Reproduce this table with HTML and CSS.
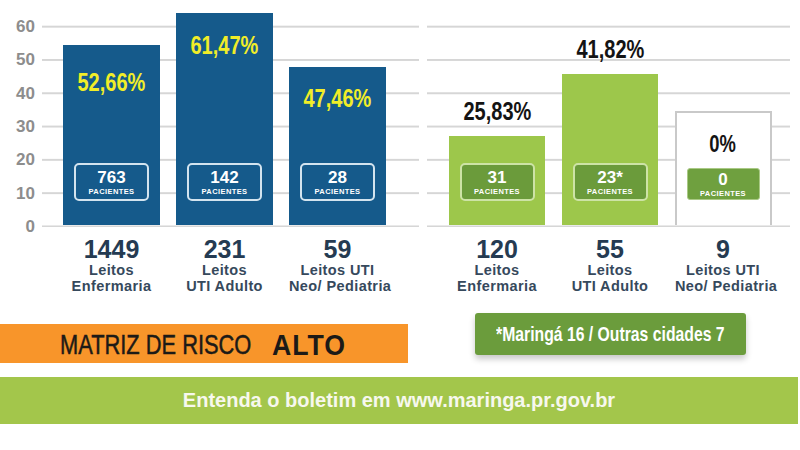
FILE: index.html
```html
<!DOCTYPE html>
<html lang="pt-BR">
<head>
<meta charset="utf-8">
<title>Boletim leitos</title>
<link rel="stylesheet" href="styles.css">
</head>
<body>
<div class="page">
  <div class="top">
    <div class="axis">
      <span>70</span><span>60</span><span>50</span><span>40</span><span>30</span><span>20</span><span>10</span><span>0</span>
    </div>
    <div class="group group-blue">
      <div class="bars">
        <div class="bar blue pad-a" style="height:180px">
          <span class="pct">52,66%</span>
          <div class="pat"><b>763</b><small>PACIENTES</small></div>
        </div>
        <div class="bar blue pad-b" style="height:212px">
          <span class="pct">61,47%</span>
          <div class="pat"><b>142</b><small>PACIENTES</small></div>
        </div>
        <div class="bar blue pad-c" style="height:158px">
          <span class="pct">47,46%</span>
          <div class="pat"><b>28</b><small>PACIENTES</small></div>
        </div>
      </div>
      <div class="labels">
        <div class="lab"><strong>1449</strong><span>Leitos<br>Enfermaria</span></div>
        <div class="lab"><strong>231</strong><span>Leitos<br>UTI Adulto</span></div>
        <div class="lab"><strong>59</strong><span>Leitos UTI<br>Neo/ Pediatria</span></div>
      </div>
    </div>
    <div class="group group-green">
      <div class="bars">
        <div class="col">
          <span class="pct">25,83%</span>
          <div class="bar green" style="height:89px">
            <div class="pat"><b>31</b><small>PACIENTES</small></div>
          </div>
        </div>
        <div class="col">
          <span class="pct">41,82%</span>
          <div class="bar green" style="height:151px">
            <div class="pat"><b>23*</b><small>PACIENTES</small></div>
          </div>
        </div>
        <div class="col">
          <div class="bar empty" style="height:114px">
            <span class="pct">0%</span>
            <div class="pat"><b>0</b><small>PACIENTES</small></div>
          </div>
        </div>
      </div>
      <div class="labels">
        <div class="lab"><strong>120</strong><span>Leitos<br>Enfermaria</span></div>
        <div class="lab"><strong>55</strong><span>Leitos<br>UTI Adulto</span></div>
        <div class="lab"><strong>9</strong><span>Leitos UTI<br>Neo/ Pediatria</span></div>
      </div>
    </div>
  </div>
  <div class="mid">
    <div class="risk"><span class="risk-a">MATRIZ DE RISCO</span><span class="risk-b">ALTO</span></div>
    <div class="note"><span>*Maringá 16 / Outras cidades 7</span></div>
  </div>
  <div class="footer">Entenda o boletim em www.maringa.pr.gov.br</div>
</div>
</body>
</html>
```
FILE: styles.css
```css
body {
  margin: 0;
  background: #fff;
  font-family: "Liberation Sans", Arial, sans-serif;
}
.page {
  width: 800px;
  height: 450px;
  overflow: hidden;
}
.top {
  display: flex;
  height: 313px;
}
.axis {
  width: 42px;
  box-sizing: border-box;
  padding-right: 7px;
  display: flex;
  flex-direction: column;
  align-items: flex-end;
  margin-top: -23.25px;
}
.axis span {
  flex: none;
  height: 33.3px;
  line-height: 33.3px;
  font-size: 17px;
  font-weight: bold;
  color: #8d8d8d;
}
.group-blue { width: 377px; }
.group-green { width: 363px; margin-left: 8px; }
.bars {
  height: 227px;
  box-sizing: border-box;
  padding-bottom: 2px;
  display: flex;
  align-items: flex-end;
  background-image: linear-gradient(to bottom, #d6d6d6 0, #d6d6d6 2px, transparent 2px);
  background-size: 100% 33.3px;
  background-position: 0 25.7px;
}
.group-blue .bars { padding-left: 21px; gap: 16px; }
.group-green .bars { padding-left: 22px; gap: 17px; }
.bar {
  flex: none;
  width: 97px;
  box-sizing: border-box;
  display: flex;
  flex-direction: column;
  align-items: center;
}
.bar.blue { background: #155a8b; }
.pct {
  display: inline-block;
  font-size: 25px;
  line-height: 25px;
  font-weight: bold;
  transform: scaleX(.8);
  white-space: nowrap;
}
.blue .pct { color: #f1ed28; }
.pad-a { padding-top: 25px; }
.pad-b { padding-top: 20px; }
.pad-c { padding-top: 19px; }
.pat {
  margin-top: auto;
  margin-bottom: 24px;
  width: 75px;
  height: 38px;
  box-sizing: border-box;
  border: 2px solid #d3e4ef;
  border-radius: 5px;
  display: flex;
  flex-direction: column;
  align-items: center;
  justify-content: center;
  color: #fff;
}
.pat b {
  font-size: 17px;
  line-height: 19px;
}
.pat small {
  font-size: 7.5px;
  line-height: 9px;
  font-weight: bold;
  letter-spacing: .4px;
}
.col {
  flex: none;
  width: 96px;
  display: flex;
  flex-direction: column;
  align-items: center;
}
.col .pct {
  color: #141414;
  margin-bottom: 12px;
}
.bar.green {
  width: 96px;
  background: #9dc74b;
}
.green .pat {
  background: #6b9b3b;
  border-color: #cde3a6;
}
.bar.empty {
  width: 97px;
  background: #fff;
  border: 2px solid #c9c9c9;
  border-bottom: 0;
  padding-top: 20px;
}
.empty .pct {
  font-size: 23px;
  line-height: 23px;
  color: #141414;
}
.empty .pat {
  width: 73px;
  height: 35px;
  border: 1px solid #a9c985;
  border-radius: 3px;
  background: #6fa03f;
  margin-bottom: 25px;
}
.labels {
  display: flex;
  margin-top: 9px;
}
.group-blue .labels { padding-left: 21px; gap: 16px; }
.group-green .labels { padding-left: 22px; gap: 17px; }
.lab {
  flex: none;
  width: 97px;
  text-align: center;
  white-space: nowrap;
}
.group-green .lab { width: 96px; }
.lab strong {
  display: block;
  font-size: 25px;
  line-height: 26px;
  color: #253b52;
}
.lab span {
  display: block;
  font-size: 14.5px;
  line-height: 16.2px;
  letter-spacing: .4px;
  font-weight: bold;
  color: #36495c;
}
.mid {
  display: flex;
  align-items: flex-start;
  height: 50px;
}
.risk {
  margin-top: 11px;
  width: 408px;
  height: 39px;
  box-sizing: border-box;
  padding-left: 60px;
  padding-top: 3px;
  background: #f8952a;
  display: flex;
  align-items: center;
  color: #1c1a17;
}
.risk-a {
  display: inline-block;
  width: 192px;
  white-space: nowrap;
  font-size: 28px;
  -webkit-text-stroke: 0.5px #1c1a17;
  transform: scaleX(.78);
  transform-origin: left center;
}
.risk-b {
  display: inline-block;
  margin-left: 20px;
  font-size: 29px;
  font-weight: bold;
  letter-spacing: 1px;
  transform: scaleX(.92);
  transform-origin: left center;
}
.note {
  margin-left: 67px;
  width: 271px;
  height: 42px;
  background: #6b9c3c;
  border-radius: 3px;
  box-shadow: 0 4px 6px rgba(0, 0, 0, .22);
  display: flex;
  align-items: center;
  justify-content: center;
  color: #fff;
}
.note span {
  display: inline-block;
  font-size: 21px;
  font-weight: bold;
  white-space: nowrap;
  transform: scaleX(.75);
}
.footer {
  margin-top: 14px;
  width: 798px;
  height: 47px;
  background: #a3c64b;
  color: #f7f8ee;
  font-size: 20px;
  font-weight: bold;
  text-align: center;
  line-height: 47px;
}
```
